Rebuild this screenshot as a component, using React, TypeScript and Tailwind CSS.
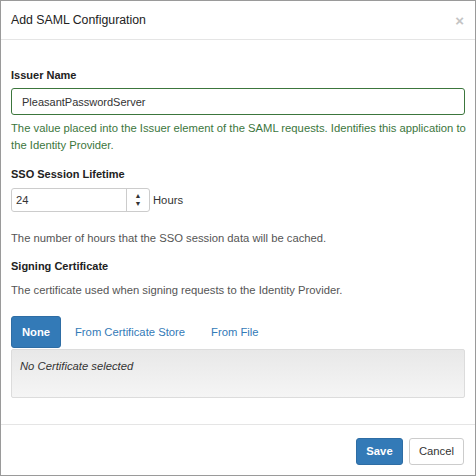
import { useState } from "react";

export default function App() {
  const [tab, setTab] = useState("none");
  const [hours, setHours] = useState("24");

  return (
    <div className="w-[476px] h-[476px] bg-white border border-[#9a9a9a] flex flex-col text-[#333] text-[11.25px]" style={{ fontFamily: '"Liberation Sans", Arial, sans-serif' }}>
      {/* header */}
      <div className="h-[39px] flex items-center justify-between pl-[10px] pr-[11px] border-b border-[#e5e5e5] shrink-0">
        <h4 className="text-[12.3px] text-[#222]">Add SAML Configuration</h4>
        <span className="text-[#c4c4c4] text-[15px] font-bold leading-none">×</span>
      </div>

      {/* body */}
      <div className="flex-1 px-[10px] pt-[28px]">
        <label className="block font-bold text-[11px] text-[#222] leading-[14px]">Issuer Name</label>
        <input
          className="mt-[6px] w-full h-[27px] border border-[#3c763d] rounded-[3px] px-[10px] text-[11px] text-[#333] outline-none"
          defaultValue="PleasantPasswordServer"
        />
        <p className="mt-[5px] mr-[-6px] text-[#3c763d] leading-[17px]">
          The value placed into the Issuer element of the SAML requests. Identifies this application to the Identity Provider.
        </p>

        <label className="block mt-[13px] font-bold text-[11px] text-[#222] leading-[14px]">SSO Session Lifetime</label>
        <div className="mt-[7px] flex items-center gap-[3px]">
          <div className="flex w-[139px] h-[24px] border border-[#ccc] rounded-[3px]">
            <input
              className="flex-1 min-w-0 px-[4px] text-[11.25px] outline-none"
              value={hours}
              onChange={(e) => setHours(e.target.value)}
            />
            <div className="w-[23px] border-l border-[#ccc] flex flex-col items-center justify-center text-[7px] leading-[8px] text-[#333]">
              <span>▲</span>
              <span>▼</span>
            </div>
          </div>
          <span>Hours</span>
        </div>
        <p className="mt-[18px] text-[#555] leading-[17px]">The number of hours that the SSO session data will be cached.</p>

        <label className="block mt-[12px] font-bold text-[11px] text-[#222] leading-[14px]">Signing Certificate</label>
        <p className="mt-[9px] text-[#555] leading-[17px]">The certificate used when signing requests to the Identity Provider.</p>

        <div className="mt-[17px] flex items-center">
          <button
            onClick={() => setTab("none")}
            className={"h-[32px] w-[50px] rounded-[3px] font-bold " + (tab === "none" ? "bg-[#337ab7] border border-[#2e6da4] text-white" : "text-[#337ab7]")}
          >
            None
          </button>
          <button
            onClick={() => setTab("store")}
            className={"h-[32px] ml-[3px] px-[11px] rounded-[3px] " + (tab === "store" ? "bg-[#337ab7] text-white" : "text-[#337ab7]")}
          >
            From Certificate Store
          </button>
          <button
            onClick={() => setTab("file")}
            className={"h-[32px] ml-[4px] px-[11px] rounded-[3px] " + (tab === "file" ? "bg-[#337ab7] text-white" : "text-[#337ab7]")}
          >
            From File
          </button>
        </div>
        <div className="mt-[1px] h-[49px] border border-[#dcdcdc] rounded-[2px] bg-gradient-to-b from-[#e8e8e8] to-[#f5f5f5] px-[8px] pt-[8px] italic text-[#333]">
          No Certificate selected
        </div>
      </div>

      {/* footer */}
      <div className="h-[51px] border-t border-[#e5e5e5] flex items-center justify-end gap-[6px] pr-[11px] pt-[2px] shrink-0">
        <button className="h-[27px] w-[47px] rounded-[3px] bg-[#337ab7] border border-[#2e6da4] text-white font-bold">Save</button>
        <button className="h-[27px] w-[55px] rounded-[3px] bg-white border border-[#ccc] text-[#333]">Cancel</button>
      </div>
    </div>
  );
}
